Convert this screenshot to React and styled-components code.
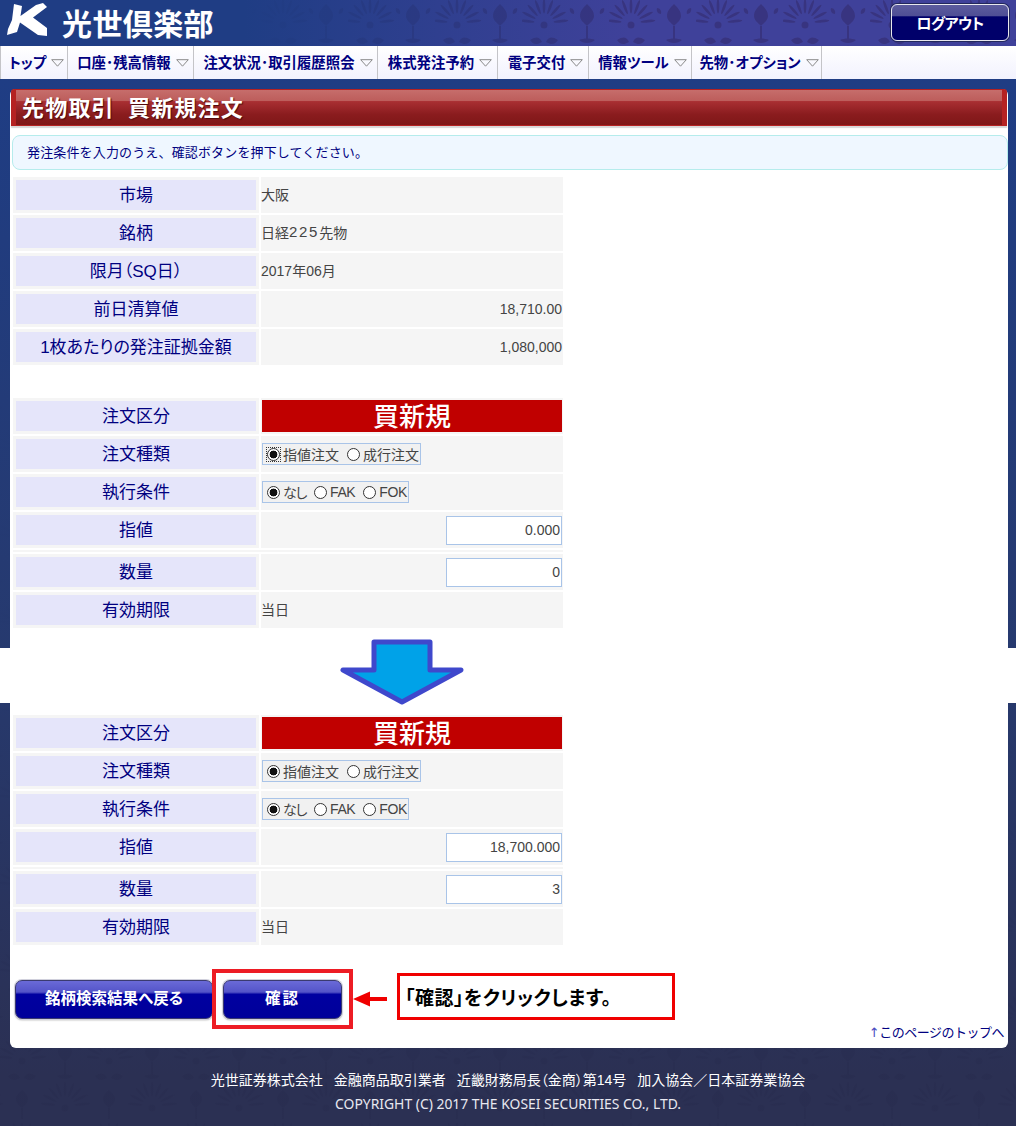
import React from "react";
import styled, { createGlobalStyle } from "styled-components";

const FONT = `"Liberation Sans", "Noto Sans CJK JP", sans-serif`;

const palmette = () => {
  let p = "";
  for (let i = -4; i <= 4; i++) {
    p += `<ellipse cx='22' cy='10' rx='1.4' ry='7.5' transform='rotate(${i * 21} 22 27)'/>`;
  }
  return p;
};

const tile = (c) =>
  `url("data:image/svg+xml,${encodeURIComponent(
    `<svg xmlns='http://www.w3.org/2000/svg' width='87' height='87' viewBox='0 0 87 87'><g fill='${c}'>` +
      `<g transform='translate(0 -4)'>${palmette()}<circle cx='22' cy='29' r='3.5'/><path d='M8 44c6-4 10-3 12 2-5 3-9 3-12-2zM36 44c-6-4-10-3-12 2 5 3 9 3 12-2z'/></g>` +
      `<path d='M65 4c4 4 7 7 7 12 0 4-4 7-7 10-3-3-7-6-7-10 0-5 3-8 7-12z'/><path d='M64 26h2v14h-2zM57 40c4-2 12-2 16 0-4 4-12 4-16 0z'/><path d='M48 8c3 0 5 3 4 6-3 0-5-3-4-6zM82 8c-3 0-5 3-4 6 3 0 5-3 4-6z'/>` +
      `<g transform='translate(43 43)'>${palmette()}<circle cx='22' cy='29' r='3.5'/></g><g transform='translate(-43 43)'>${palmette()}<circle cx='22' cy='29' r='3.5'/></g>` +
      `<path d='M22 54c3 3 6 5 6 9 0 4-3 6-6 9-3-3-6-5-6-9 0-4 3-6 6-9z'/><path d='M21 72h2v11h-2z'/>` +
      `</g></svg>`
  )}")`;

const Global = createGlobalStyle`
  html, body { margin: 0; padding: 0; background: #fff; }
  body { font-family: ${FONT}; width: 1016px; }
  * { box-sizing: border-box; }
`;

const Page = styled.div`
  width: 1016px;
  height: 1126px;
  display: flex;
  flex-direction: column;
  overflow: hidden;
`;

const Header = styled.header`
  height: 46px;
  display: flex;
  align-items: center;
  padding: 0 7px 0 6px;
  background:
    linear-gradient(90deg, #1f3d84 0%, #1f3d84 24%, rgba(31, 61, 132, 0) 62%),
    ${tile("rgba(52,44,112,0.62)")},
    #3f419a;
`;

const Logo = styled.svg`
  width: 42px;
  height: 36px;
  flex: none;
  margin-top: -6px;
`;

const Brand = styled.div`
  margin-left: 14px;
  color: #fff;
  font: 700 30px/36px "Noto Sans CJK JP", sans-serif;
  letter-spacing: 0.4px;
  flex: 1;
  margin-top: -3px;
`;

const Logout = styled.button`
  width: 118px;
  height: 37px;
  margin-top: -1px;
  border: 1px solid #e8e8ee;
  border-radius: 6px;
  color: #fff;
  font: 700 15px/1 "Noto Sans CJK JP", sans-serif;
  font-feature-settings: "palt";
  letter-spacing: -0.6px;
  background: linear-gradient(180deg, #5c5c9e 0, #4f4f95 30%, #00006a 34%, #00006a 100%);
  box-shadow: 0 0 0 1px #23285c;
  padding: 0;
`;

const Nav = styled.nav`
  height: 33px;
  display: flex;
  background: linear-gradient(180deg, #ffffff 0%, #f2f2fe 100%);
`;

const NavItem = styled.div`
  width: ${(p) => p.$w}px;
  height: 33px;
  flex: none;
  display: flex;
  align-items: center;
  justify-content: center;
  gap: 5px;
  padding-left: 5px;
  border-right: 1px solid #c4c4c8;
  border-left: ${(p) => (p.$first ? "1px solid #c4c4c8" : "0")};
  color: #000080;
  font: 700 14.4px/1 "Noto Sans CJK JP", sans-serif;
  font-feature-settings: "palt";
  white-space: nowrap;
`;

const Chevron = styled.svg`
  width: 13px;
  height: 8px;
  flex: none;
`;

const Main = styled.div`
  flex: 1;
  display: flex;
  flex-direction: column;
  background:
    linear-gradient(180deg, #1f3d84 0%, rgba(38, 58, 112, 0.95) 55%, rgba(43, 48, 83, 0.8) 95%),
    ${tile("rgba(28,28,62,0.55)")},
    #2b3053;
`;

const Section = styled.div`
  padding: ${(p) => p.$pt || 0}px 8px 0 10px;
`;

const Card = styled.div`
  background: #fff;
  border-radius: ${(p) => p.$radius};
  padding: ${(p) => p.$pad};
`;

const TitleBar = styled.h1`
  margin: 0 0 0 1px;
  width: 996px;
  height: 37px;
  padding: 0 0 4px 6px;
  display: flex;
  align-items: center;
  color: #fff;
  font: 700 22px/1 "Noto Sans CJK JP", sans-serif;
  letter-spacing: 1.2px;
  word-spacing: 7px;
  white-space: pre;
  text-shadow: 1px 1px 1px #4d0b0b;
  border-left: 5px solid #b52222;
  border-right: 5px solid #b52222;
  border-top: 1px solid #b52222;
  border-bottom: 1px solid #b52222;
  border-radius: 3px 3px 0 0;
  background: linear-gradient(180deg, #c66d6b 0, #bd5e5c 30%, #a92f32 33%, #8a1c1e 70%, #7f1717 100%);
  box-shadow: 0 2px 1px #d8d8d8;
`;

const Notice = styled.div`
  margin: 9px 0 7px 2px;
  height: 35px;
  padding: 0 0 2px 14px;
  display: flex;
  align-items: center;
  color: #000080;
  font: 400 13px/1 "Noto Sans CJK JP", sans-serif;
  letter-spacing: 0.15px;
  background: #eff7ff;
  border: 1px solid #b5ecec;
  border-radius: 8px;
`;

const Table = styled.div`
  display: flex;
  flex-direction: column;
  gap: 2px;
  margin-left: 3px;
  width: 550px;
`;

const Row = styled.div`
  display: grid;
  grid-template-columns: 246px 302px;
  gap: 2px;
  height: 36px;
`;

const Label = styled.div`
  background: #f5f5f5;
  padding: 3px;
  display: flex;
  align-items: stretch;
`;

const LabelInner = styled.div`
  flex: 1;
  display: flex;
  align-items: center;
  justify-content: center;
  padding-bottom: 3px;
  background: #e5e5fa;
  color: #000080;
  font-family: ${FONT};
  font-size: 17px;
  font-weight: 400;
  font-feature-settings: "palt";
`;

const Value = styled.div`
  background: #f5f5f5;
  display: flex;
  align-items: center;
  justify-content: ${(p) => (p.$right ? "flex-end" : "flex-start")};
  padding: ${(p) => (p.$right ? "0 1px 0 0" : "0")};
  color: #444;
  font-size: 14px;
`;

const Side = styled(Value)`
  padding-bottom: 3px;
`;

const WideDigits = styled.span`
  font-size: 15px;
  letter-spacing: 1.7px;
`;

const Separator = styled.div`
  height: 2px;
  background: #f5f5f5;
`;

const Kind = styled.div`
  width: 300px;
  height: 32px;
  margin-left: 1px;
  background: #c00000;
  color: #fff;
  display: flex;
  align-items: center;
  justify-content: center;
  padding-bottom: 2px;
  font: 500 26px/1 "Noto Sans CJK JP", sans-serif;
`;

const RadioBox = styled.div`
  display: flex;
  align-items: center;
  height: 22px;
  margin-left: 1px;
  padding: 0 1px 0 4px;
  border: 1px solid #a9c4e8;
  background: #f1f1f1;
  white-space: nowrap;
`;

const Radio = styled.span`
  width: 13px;
  height: 13px;
  flex: none;
  border-radius: 50%;
  border: 1px solid #333;
  background: ${(p) =>
    p.$on ? "radial-gradient(circle, #111 0 3.6px, #fff 4.2px)" : "#fff"};
  margin: 0 3px 0 ${(p) => (p.$first ? "0" : "8px")};
`;

const FocusRing = styled.span`
  display: flex;
  flex: none;
  margin-right: 3px;
  outline: 1px dotted #333;

  ${Radio} {
    margin: 0;
  }
`;

const Narrow = styled.span`
  letter-spacing: -2.5px;
`;

const LatinOption = styled.span`
  letter-spacing: -0.4px;
`;

const NumberField = styled.input`
  width: 116px;
  height: 29px;
  border: 1px solid #a9c4e8;
  background: #fff;
  color: #444;
  font: 400 14px/1 ${FONT};
  text-align: right;
  padding: 0 1px 0 0;
`;

const Spacer = styled.div`
  height: ${(p) => p.$h}px;
`;

const ArrowBand = styled.div`
  height: 55px;
  background: #fff;
  position: relative;
`;

const BigArrow = styled.svg`
  position: absolute;
  left: 339px;
  top: -9px;
  width: 126px;
  height: 66px;
`;

const Actions = styled.div`
  display: flex;
  align-items: center;
  margin: 24px 0 0 5px;
  height: 60px;
`;

const Btn = styled.button`
  width: ${(p) => p.$w}px;
  height: 39px;
  flex: none;
  border: 1px solid #3a3a70;
  border-radius: 7px;
  color: #fff;
  font: 700 15.5px/1 "Noto Sans CJK JP", sans-serif;
  font-feature-settings: "palt";
  letter-spacing: ${(p) => p.$ls || 0}px;
  background: linear-gradient(180deg, #6a6ad8 0, #5454c8 30%, #0000a0 36%, #00009a 100%);
  padding: 0 0 2px;
  box-shadow: 0 0 0 1px #d0d0dc, 0 1px 2px rgba(0, 0, 0, 0.4);
`;

const Highlight = styled.div`
  width: 141px;
  height: 60px;
  flex: none;
  display: flex;
  align-items: center;
  justify-content: center;
  border: 4px solid #ed1c24;
  margin-left: -1px;
`;

const Pointer = styled.svg`
  width: 44px;
  height: 16px;
  flex: none;
`;

const Callout = styled.div`
  width: 278px;
  height: 47px;
  flex: none;
  display: flex;
  align-items: center;
  padding-left: 5px;
  border: 3px solid #f00000;
  margin-top: -6px;
  color: #000;
  font: 700 19px/1 "Noto Sans CJK JP", sans-serif;
  font-feature-settings: "palt";
  letter-spacing: 0.5px;
`;

const TopLink = styled.div`
  text-align: right;
  margin: -6px 4px 0 0;
  color: #000080;
  font-size: 13px;
  letter-spacing: -0.5px;
  line-height: 20px;
`;

const UpArrow = styled.span`
  font-family: "DejaVu Sans", sans-serif;
  color: #4a4ac0;
`;

const Footer = styled.footer`
  flex: 1;
  padding-top: 21px;
  text-align: center;
  color: #fff;
  line-height: 23px;
`;

const FooterLine = styled.div`
  font-family: ${FONT};
  font-size: 14px;
  font-feature-settings: "palt";
  word-spacing: 1.6px;
  white-space: pre;
`;

const CopyLine = styled.div`
  font: 400 13.9px/23px "Noto Sans", sans-serif;
  color: #e8e8f0;
`;

const NAV = [
  ["トップ", 68],
  ["口座･残高情報", 126],
  ["注文状況･取引履歴照会", 184],
  ["株式発注予約", 120],
  ["電子交付", 91],
  ["情報ツール", 103],
  ["先物･オプション", 130],
];

const INFO = [
  ["市場", "大阪"],
  ["銘柄", <>日経<WideDigits>225</WideDigits>先物</>],
  ["限月\uFF08SQ日\uFF09", "2017年06月"],
  ["前日清算値", "18,710.00", true],
  ["1枚あたりの発注証拠金額", "1,080,000", true],
];

const FOOTER_TEXT =
  "光世証券株式会社  金融商品取引業者  近畿財務局長\uFF08金商\uFF09第14号  加入協会\uFF0F日本証券業協会";

function OrderTable({ price, qty, focus }) {
  return (
    <Table>
      <Row>
        <Label><LabelInner>注文区分</LabelInner></Label>
        <Value><Kind>買新規</Kind></Value>
      </Row>
      <Row>
        <Label><LabelInner>注文種類</LabelInner></Label>
        <Value>
          <RadioBox>
            {focus ? (
              <FocusRing><Radio $on $first /></FocusRing>
            ) : (
              <Radio $on $first />
            )}
            指値注文
            <Radio />成行注文
          </RadioBox>
        </Value>
      </Row>
      <Row>
        <Label><LabelInner>執行条件</LabelInner></Label>
        <Value>
          <RadioBox>
            <Radio $on $first /><Narrow>なし</Narrow>
            <Radio /><LatinOption>FAK</LatinOption>
            <Radio /><LatinOption>FOK</LatinOption>
          </RadioBox>
        </Value>
      </Row>
      <Row>
        <Label><LabelInner>指値</LabelInner></Label>
        <Value $right><NumberField readOnly value={price} /></Value>
      </Row>
      <Separator />
      <Row>
        <Label><LabelInner>数量</LabelInner></Label>
        <Value $right><NumberField readOnly value={qty} /></Value>
      </Row>
      <Row>
        <Label><LabelInner>有効期限</LabelInner></Label>
        <Side>当日</Side>
      </Row>
    </Table>
  );
}

export default function App() {
  return (
    <Page>
      <Global />
      <Header>
        <Logo viewBox="6 2 42 36">
          <path
            fill="#fff"
            d="M14 4 L22 6 L20.5 16 L36 5 L43 3 L47 7 L33 17.5 L47 28 L47 36 L38 35 L20 22.5 L17 32 L7 35 L8 29 L12 20 Z"
          />
        </Logo>
        <Brand>光世倶楽部</Brand>
        <Logout>ログアウト</Logout>
      </Header>
      <Nav>
        {NAV.map(([t, w], i) => (
          <NavItem key={t} $w={w} $first={i === 0}>
            {t}
            <Chevron viewBox="0 0 13 8">
              <path d="M0.7 0.7H12.3L6.5 7.2Z" fill="none" stroke="#8a8a8a" />
            </Chevron>
          </NavItem>
        ))}
      </Nav>
      <Main>
        <Section $pt={10}>
          <Card $radius="6px 6px 0 0" $pad="0 0 20px">
            <TitleBar>先物取引 買新規注文</TitleBar>
            <Notice>発注条件を入力のうえ、確認ボタンを押下してください。</Notice>
            <Table>
              {INFO.map(([l, v, r]) => (
                <Row key={l}>
                  <Label><LabelInner>{l}</LabelInner></Label>
                  {r ? <Value $right>{v}</Value> : <Side>{v}</Side>}
                </Row>
              ))}
            </Table>
            <Spacer $h={33} />
            <OrderTable price="0.000" qty="0" focus />
          </Card>
        </Section>
        <ArrowBand>
          <BigArrow viewBox="0 0 126 66">
            <path
              d="M35 3H91V31H122L63 63L4 31H35Z"
              fill="#00a2e8"
              stroke="#3f48cc"
              strokeWidth="5"
              strokeLinejoin="round"
            />
          </BigArrow>
        </ArrowBand>
        <Section>
          <Card $radius="0 0 6px 6px" $pad="12px 0 5px">
            <OrderTable price="18,700.000" qty="3" />
            <Actions>
              <Btn $w={198}>銘柄検索結果へ戻る</Btn>
              <Highlight>
                <Btn $w={119} $ls={2}>確認</Btn>
              </Highlight>
              <Pointer viewBox="0 0 44 16">
                <path d="M0 8L17 0.5V6H34V10H17V15.5Z" fill="#f00000" />
              </Pointer>
              <Callout>「確認」をクリックします。</Callout>
            </Actions>
            <TopLink><UpArrow>↑</UpArrow>このページのトップへ</TopLink>
          </Card>
        </Section>
        <Footer>
          <FooterLine>{FOOTER_TEXT}</FooterLine>
          <CopyLine>COPYRIGHT (C) 2017 THE KOSEI SECURITIES CO., LTD.</CopyLine>
        </Footer>
      </Main>
    </Page>
  );
}
